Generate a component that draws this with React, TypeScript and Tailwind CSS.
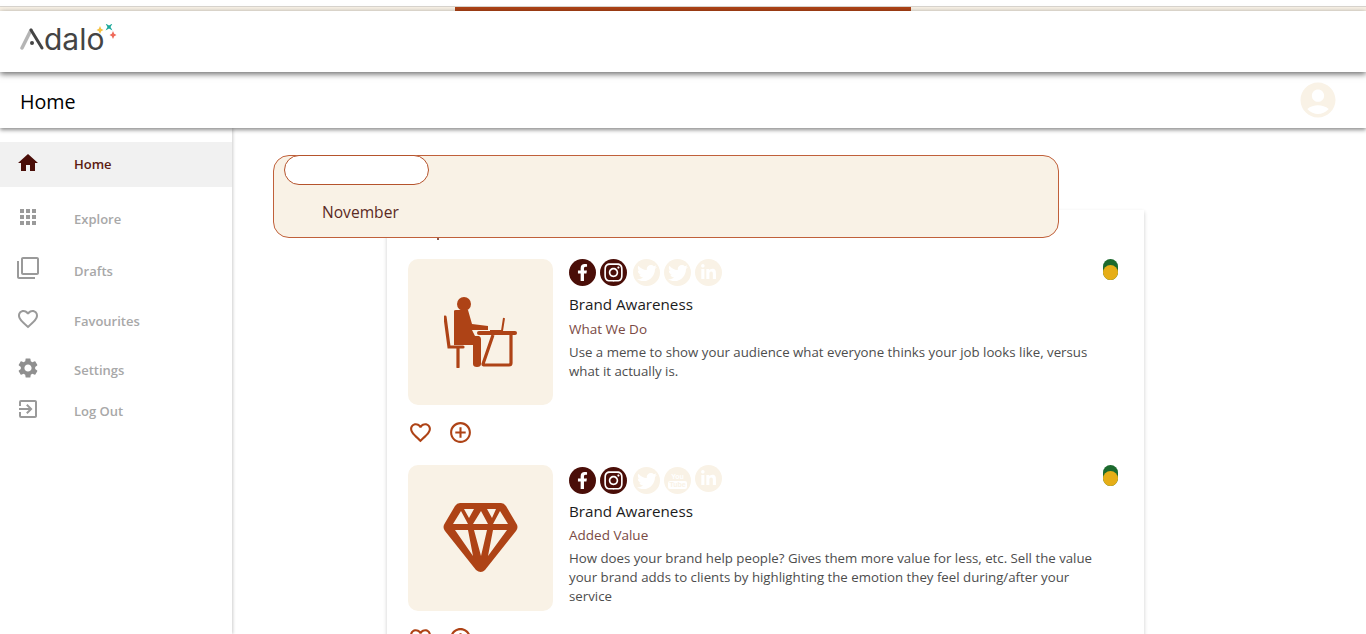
import React from 'react';
import { MdHome, MdApps, MdFilterNone, MdFavoriteBorder, MdSettings, MdExitToApp, MdAddCircleOutline, MdAccountCircle } from 'react-icons/md';
import { FaFacebookF, FaInstagram, FaTwitter, FaLinkedinIn } from 'react-icons/fa';

const Logo = () => (
  <div className="relative h-[30px] w-[100px]">
    <svg width="26" height="26" viewBox="0 0 26 26" className="absolute left-0 top-[2px]">
      <path d="M2 22 L11 4" stroke="#b5b5b5" strokeWidth="3.5" strokeLinecap="round" />
      <path d="M11 4 L22 22" stroke="#444" strokeWidth="3" strokeLinecap="round" />
      <circle cx="12" cy="17" r="2" fill="#444" />
    </svg>
    <span className="absolute left-[24px] top-[-5px] font-['Inter',sans-serif] text-[30px] leading-[40px] text-[#444]">dalo</span>
    <svg width="24" height="20" viewBox="0 0 24 20" className="absolute left-[76px] top-0">
      <path d="M4 2 L5.2 4.8 L7.5 6 L5.2 7.2 L4 10 L2.8 7.2 L0.5 6 L2.8 4.8 Z" fill="#f5c242" />
      <path d="M9.5 -0.5 L13 1.5 L16.5 -0.5 L14.5 3 L16.5 6.5 L13 4.5 L9.5 6.5 L11.5 3 Z" fill="#1aa89a" />
      <path d="M17 7 L18.2 9.8 L20.5 11 L18.2 12.2 L17 15 L15.8 12.2 L13.5 11 L15.8 9.8 Z" fill="#ef6a5a" />
    </svg>
  </div>
);

const NavItem = ({ icon, label, active, className }: { icon: React.ReactNode; label: string; active?: boolean; className: string }) => (
  <div className={`flex items-start ${className} ${active ? 'bg-[#f1f1f1]' : ''}`}>
    <div className="w-[74px] shrink-0 pl-[16px]">{icon}</div>
    <span className={`text-[13px] font-semibold leading-5 ${active ? 'text-[#5b1a12]' : 'text-[#a8a8a8]'}`}>{label}</span>
  </div>
);

const Social = ({ icon, on, className }: { icon: React.ReactNode; on?: boolean; className?: string }) => (
  <div className={`flex size-[27px] items-center justify-center rounded-full text-white ${on ? 'bg-[#4a0e08]' : 'bg-[#f9f2e6]'} ${className ?? ''}`}>
    {icon}
  </div>
);

const Status = () => (
  <div className="relative h-[21px] w-[15px] rounded-full bg-[#1c6a2e]">
    <div className="absolute bottom-0 left-0 size-[15px] rounded-full bg-[#e6ae17]" />
  </div>
);

const YouTube = () => (
  <div className="flex flex-col items-center font-['Liberation_Sans',sans-serif] text-[7px] font-bold leading-[8px]">
    <span>You</span>
    <span className="rounded-[2px] bg-white px-[1px] text-[#f9f2e6]">Tube</span>
  </div>
);

const Desk = () => (
  <svg width="73" height="71" viewBox="0 0 73 71" fill="none">
    <circle cx="20" cy="7" r="7" fill="#ae4316" />
    <path d="M10 14 Q10 13 12 13 H24 L28 27 L44 29 V33 H28 L31 39 H35 Q37 40 37 42 V67 Q37 70 33 70 Q29 70 29 67 V48 H10 Z" fill="#ae4316" />
    <path d="M1 20 L5 50 H19 M14 50 V70" stroke="#ae4316" strokeWidth="3.2" strokeLinecap="round" />
    <path d="M35 36 H71" stroke="#ae4316" strokeWidth="4" strokeLinecap="round" />
    <path d="M46 34 H58 L60 21" stroke="#ae4316" strokeWidth="2" />
    <path d="M49 38 L39 67 Q39 68 41 68 H65 Q67 68 67 66 V38" stroke="#ae4316" strokeWidth="3.2" strokeLinejoin="round" />
  </svg>
);

const Gem = () => (
  <svg width="75" height="70" viewBox="0 0 75 70">
    <path fillRule="evenodd" fill="#ae4316" d="M17 0 H58 Q61 0 63 3 L73 20 Q76 24 73 28 L42 67 Q38 71 33 67 L2 28 Q-1 24 2 20 L12 3 Q14 0 17 0 Z
      M21 6 L26 15 L31 6 Z M44 6 L49 15 L53 6 Z M38 8 L30 21 H45 Z
      M18 8 L10 21 H25 Z M57 8 L50 21 H65 Z
      M12 27 L30 53 L25 27 Z M31 27 L38 53 L44 27 Z M50 27 L45 53 L64 27 Z" />
  </svg>
);

const Card = ({ art, title, body, socials, titleClass, labelClass }: { art: React.ReactNode; title: string; body: string; socials: React.ReactNode; titleClass: string; labelClass: string }) => (
  <div>
    <div className="flex">
      <div className="flex h-[146px] w-[145px] shrink-0 items-center justify-center rounded-[10px] bg-[#f9f2e6]">{art}</div>
      <div className="ml-[16px] w-[527px]">
        {socials}
        <h3 className={`text-[15.2px] font-medium leading-5 text-[#1c1c1c] ${titleClass}`}>Brand Awareness</h3>
        <p className={`text-[13.5px] leading-5 text-[#7a4a44] ${labelClass}`}>{title}</p>
        <p className="mt-[4px] text-[13.25px] leading-[19px] text-[#4d4d4d]">{body}</p>
      </div>
      <div className="ml-[7px] shrink-0"><Status /></div>
    </div>
    <div className="mt-[15px] flex items-center gap-[15px] text-[#ae4316]">
      <MdFavoriteBorder size={25} />
      <MdAddCircleOutline size={25} />
    </div>
  </div>
);

export default function App() {
  return (
    <div className="h-[634px] w-[1366px] overflow-hidden bg-white font-['Open_Sans',sans-serif]">
      <div className="relative mt-[6px] h-[5px] border-t border-[#d8d4ce] bg-[#f9f2e6]">
        <div className="absolute left-[455px] top-0 h-[4px] w-[456px] bg-[#ae4316]" />
      </div>
      <header className="relative z-20 flex h-[61px] items-start bg-white pl-[20px] pt-[13px] shadow-[0_2px_6px_rgba(0,0,0,0.6)]">
        <Logo />
      </header>
      <div className="relative z-10 flex h-[56px] items-center justify-between bg-white pl-[20px] pr-[27px] shadow-[0_2px_4px_rgba(0,0,0,0.45)]">
        <span className="mt-[4px] text-[19.7px] leading-7 text-black">Home</span>
        <MdAccountCircle size={42} color="#f9f2e6" />
      </div>
      <div className="flex h-[506px]">
        <aside className="w-[232px] shrink-0 pt-[14px] shadow-[1px_0_3px_rgba(0,0,0,0.2)]">
          <NavItem active className="h-[45px] pt-[12px]" label="Home" icon={<MdHome size={24} color="#4a0e08" className="-mt-[3px]" />} />
          <NavItem className="mt-[22px] h-[29px]" label="Explore" icon={<MdApps size={24} color="#9a9a9a" className="-mt-[4px]" />} />
          <NavItem className="mt-[23px] h-[28px] items-center" label="Drafts" icon={<MdFilterNone size={24} color="#9a9a9a" className="-mt-[5px]" />} />
          <NavItem className="mt-[22px] h-[28px]" label="Favourites" icon={<MdFavoriteBorder size={24} color="#9a9a9a" className="-mt-[4px]" />} />
          <NavItem className="mt-[21px] h-[29px]" label="Settings" icon={<MdSettings size={24} color="#8f8f8f" className="-mt-[4px]" />} />
          <NavItem className="mt-[12px] h-[29px]" label="Log Out" icon={<MdExitToApp size={24} color="#9a9a9a" className="-mt-[4px]" />} />
        </aside>
        <main className="relative flex-1">
          <div className="absolute left-[41px] top-[27px] z-10 h-[83px] w-[786px] rounded-[16px] border border-[#c0603a] bg-[#f9f2e6]">
            <div className="-mt-[1px] ml-[10px] h-[30px] w-[145px] rounded-[15px] border border-[#b5532c] bg-white" />
            <div className="ml-[48px] mt-[17px] text-[15.6px] leading-5 text-[#5b2a24]">November</div>
          </div>
          <div className="relative ml-[155px] mt-[82px] h-[500px] w-[757px] pl-[21px] pt-[49px] shadow-[0_2px_4px_rgba(0,0,0,0.2)]">
            <div className="absolute left-[50px] top-[27px] h-[3px] w-[2px] bg-[#8a5a50]" />
            <Card
              art={<Desk />}
              title="What We Do"
              titleClass="mt-[8px]"
              labelClass="mt-[5px]"
              body="Use a meme to show your audience what everyone thinks your job looks like, versus what it actually is."
              socials={
                <div className="flex gap-[4px]">
                  <Social on icon={<FaFacebookF size={17} />} />
                  <Social on icon={<FaInstagram size={21} />} />
                  <Social className="ml-[2px]" icon={<FaTwitter size={20} />} />
                  <Social icon={<FaTwitter size={20} />} />
                  <Social icon={<FaLinkedinIn size={17} />} />
                </div>
              }
            />
            <div className="mt-[20px]">
              <Card
                art={<Gem />}
                title="Added Value"
                titleClass="mt-[7px]"
                labelClass="mt-[4px]"
                body="How does your brand help people? Gives them more value for less, etc. Sell the value your brand adds to clients by highlighting the emotion they feel during/after your service"
                socials={
                  <div className="flex items-start gap-[4px] pt-[2px]">
                    <Social on icon={<FaFacebookF size={17} />} />
                    <Social on icon={<FaInstagram size={21} />} />
                    <Social className="ml-[2px]" icon={<FaTwitter size={20} />} />
                    <Social icon={<YouTube />} />
                    <Social className="-mt-[2px]" icon={<FaLinkedinIn size={17} />} />
                  </div>
                }
              />
            </div>
          </div>
        </main>
      </div>
    </div>
  );
}
